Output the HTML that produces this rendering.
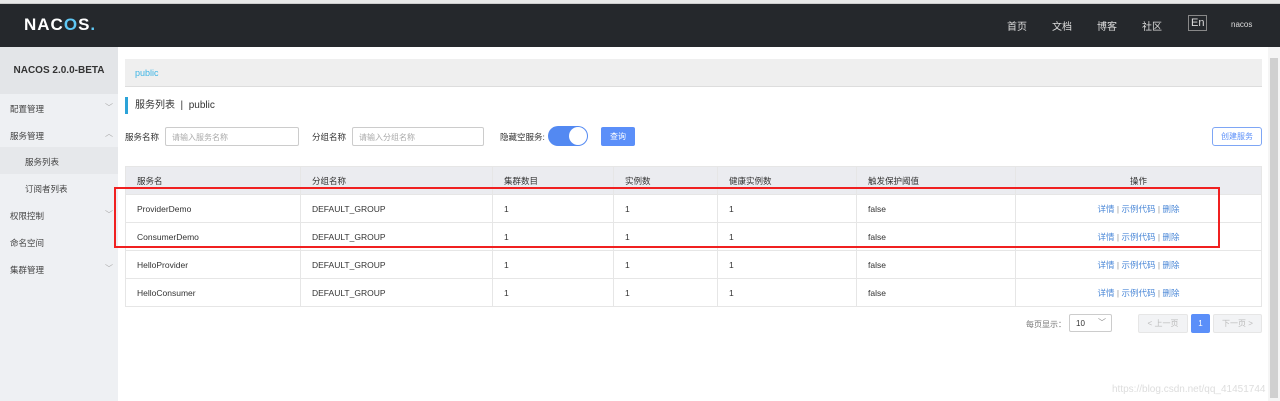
<!DOCTYPE html>
<html><head><meta charset="utf-8"><style>
*{box-sizing:border-box;margin:0;padding:0}
body{width:1280px;height:401px;overflow:hidden;background:#fff;font-family:"Liberation Sans","Noto Sans CJK SC",sans-serif;font-size:9px;color:#333;position:relative}
.top{position:absolute;left:0;top:3px;width:1280px;height:44px;background:#25282c;border-top:1px solid #ccc}
.top0{position:absolute;left:0;top:0;width:1280px;height:3px;background:#e8e8e8}
.logo{position:absolute;left:24px;top:11px;color:#fff;font-size:17px;font-weight:bold;letter-spacing:1px}
.nav{position:absolute;top:14px;color:#ddd;font-size:10px}
.side{position:absolute;left:0;top:47px;width:118px;height:354px;background:#eef0f3}
.side .t{height:47px;background:#e3e5e8;font-weight:bold;font-size:10px;text-align:center;line-height:47px;color:#333}
.mi{position:absolute;left:10px;font-size:8.5px;color:#444}
.ar{position:absolute;left:105px;font-size:8px;color:#aaa}
.bc{position:absolute;left:125px;top:59px;width:1137px;height:28px;background:#efefef;border-bottom:1px solid #ddd;color:#3cb4e5;padding:9px 10px;font-size:9px}
.ttl{position:absolute;left:125px;top:97px;height:17px;border-left:3px solid #2ca3d8;padding-left:7px;font-size:10px;line-height:17px}
.lbl{position:absolute;top:131px;font-size:8.5px;color:#333}
.inp{position:absolute;top:127px;height:19px;border:1px solid #ccc;border-radius:2px;color:#aaa;padding:4px 6px;font-size:8px}
table{position:absolute;left:125px;top:166px;width:1137px;border-collapse:collapse}
td,th{height:28px;border:1px solid #e6e6e6;text-align:left;padding-left:11px;font-weight:normal;font-size:8.5px}
th{background:#ebecf0;height:28px;color:#333}
.op{text-align:center;color:#4e8ad8;padding-left:0}
.op i{font-style:normal;color:#999}
</style></head><body>
<div class="top0"></div>
<div class="top">
<div class="logo">NAC<span style="color:#5fc8f5">O</span>S<span style="color:#5fc8f5">.</span></div>
<span class="nav" style="left:1007px">首页</span>
<span class="nav" style="left:1052px">文档</span>
<span class="nav" style="left:1097px">博客</span>
<span class="nav" style="left:1142px">社区</span>
<span class="nav" style="left:1188px;top:11px;border:1px solid #888;padding:1px 2px;font-size:11px">En</span>
<span class="nav" style="left:1231px;font-size:8px;top:16px">nacos</span>
</div>
<div class="side"><div class="t">NACOS 2.0.0-BETA</div>
<div style="position:absolute;left:0;top:100px;width:118px;height:27px;background:#e6e8eb"></div>
</div>
<span class="mi" style="top:103px">配置管理</span><span class="ar" style="top:102px">﹀</span>
<span class="mi" style="top:130px">服务管理</span><span class="ar" style="top:128px">︿</span>
<span class="mi" style="left:25px;top:156px">服务列表</span>
<span class="mi" style="left:25px;top:183px">订阅者列表</span>
<span class="mi" style="top:210px">权限控制</span><span class="ar" style="top:209px">﹀</span>
<span class="mi" style="top:237px">命名空间</span>
<span class="mi" style="top:264px">集群管理</span><span class="ar" style="top:263px">﹀</span>
<div style="position:absolute;left:1268px;top:47px;width:12px;height:354px;background:#f5f5f5"><div style="margin:11px 2px;height:340px;background:#d0d0d0"></div></div>
<div class="bc">public</div>
<div class="ttl">服务列表 &nbsp;|&nbsp; public</div>
<span class="lbl" style="left:125px">服务名称</span>
<div class="inp" style="left:165px;width:134px">请输入服务名称</div>
<span class="lbl" style="left:312px">分组名称</span>
<div class="inp" style="left:352px;width:132px">请输入分组名称</div>
<span class="lbl" style="left:500px">隐藏空服务:</span>
<div style="position:absolute;left:548px;top:126px;width:40px;height:20px;border-radius:10px;background:#5389f2"><div style="position:absolute;right:1px;top:1px;width:18px;height:18px;border-radius:9px;background:#fff"></div></div>
<div style="position:absolute;left:601px;top:127px;width:34px;height:19px;background:#5b8ff9;border-radius:2px;color:#fff;font-size:8px;text-align:center;line-height:19px">查询</div>
<div style="position:absolute;left:1212px;top:127px;width:50px;height:19px;border:1px solid #7ea6f5;border-radius:3px;color:#5b8ff9;font-size:8px;text-align:center;line-height:17px">创建服务</div>
<table>
<tr><th style="width:175px">服务名</th><th style="width:192px">分组名称</th><th style="width:121px">集群数目</th><th style="width:104px">实例数</th><th style="width:139px">健康实例数</th><th style="width:159px">触发保护阈值</th><th class="op" style="color:#333">操作</th></tr>
<tr><td>ProviderDemo</td><td>DEFAULT_GROUP</td><td>1</td><td>1</td><td>1</td><td>false</td><td class="op">详情 <i>|</i> 示例代码 <i>|</i> 删除</td></tr>
<tr><td>ConsumerDemo</td><td>DEFAULT_GROUP</td><td>1</td><td>1</td><td>1</td><td>false</td><td class="op">详情 <i>|</i> 示例代码 <i>|</i> 删除</td></tr>
<tr><td>HelloProvider</td><td>DEFAULT_GROUP</td><td>1</td><td>1</td><td>1</td><td>false</td><td class="op">详情 <i>|</i> 示例代码 <i>|</i> 删除</td></tr>
<tr><td>HelloConsumer</td><td>DEFAULT_GROUP</td><td>1</td><td>1</td><td>1</td><td>false</td><td class="op">详情 <i>|</i> 示例代码 <i>|</i> 删除</td></tr>
</table>
<div style="position:absolute;left:114px;top:187px;width:1106px;height:61px;border:2px solid #f02020"></div>
<span style="position:absolute;left:1026px;top:319px;color:#777;font-size:8px">每页显示：</span>
<div style="position:absolute;left:1069px;top:314px;width:43px;height:18px;border:1px solid #ccc;border-radius:2px;font-size:8px;padding:4px 6px">10<span style="position:absolute;right:5px;top:2px;color:#888">﹀</span></div>
<div style="position:absolute;left:1138px;top:314px;width:50px;height:19px;background:#f2f3f5;border:1px solid #e6e6e6;border-radius:2px;color:#bbb;font-size:8px;text-align:center;line-height:17px">&lt; 上一页</div>
<div style="position:absolute;left:1191px;top:314px;width:19px;height:19px;background:#5b8ff9;border-radius:2px;color:#fff;font-size:8px;text-align:center;line-height:19px">1</div>
<div style="position:absolute;left:1213px;top:314px;width:49px;height:19px;background:#f2f3f5;border:1px solid #e6e6e6;border-radius:2px;color:#bbb;font-size:8px;text-align:center;line-height:17px">下一页 &gt;</div>
<span style="position:absolute;left:1112px;top:384px;color:#ddd;font-size:10px">https://blog.csdn.net/qq_41451744</span>
</body></html>
